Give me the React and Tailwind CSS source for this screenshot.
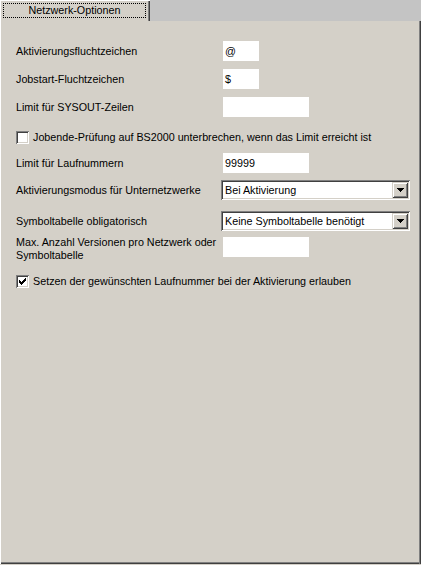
import React from "react";

const sunken =
  "shadow-[inset_1px_1px_#808080,inset_-1px_-1px_#ffffff,inset_2px_2px_#404040,inset_-2px_-2px_#d4d0c8]";
const raised =
  "shadow-[inset_1px_1px_#d4d0c8,inset_-1px_-1px_#404040,inset_2px_2px_#ffffff,inset_-2px_-2px_#808080]";

const TextField = ({ value = "", width }) => {
  return (
    <div
      className="ml-[2px] h-[20px] bg-white flex items-center pl-[2px] leading-none"
      style={{ width }}
    >
      {value}
    </div>
  );
};

const Select = ({ value }) => {
  return (
    <div className={`h-[20px] w-[189px] bg-white flex items-center p-[2px] ${sunken}`}>
      <span className="flex-1 pl-[2px] leading-none">{value}</span>
      <div className={`w-[16px] h-[16px] bg-[#d4d0c8] flex items-center justify-center ${raised}`}>
        <svg width="7" height="4" viewBox="0 0 7 4" shapeRendering="crispEdges">
          <path d="M0 0H7L3.5 4Z" fill="#000" />
        </svg>
      </div>
    </div>
  );
};

const Checkbox = ({ checked }) => {
  return (
    <div className={`w-[13px] h-[13px] bg-white shrink-0 flex items-center justify-center ${sunken}`}>
      {checked && (
        <svg width="13" height="13" viewBox="0 0 13 13" shapeRendering="crispEdges">
          <path d="M3 5H4V6H5V7H6V6H7V5H8V4H9V3H10V6H9V7H8V8H7V9H6V10H5V9H4V8H3Z" fill="#000" />
        </svg>
      )}
    </div>
  );
};

const Row = ({ label, children, className = "" }) => {
  return (
    <div className={`flex items-center h-[20px] ${className}`}>
      <div className="w-[205px]">{label}</div>
      {children}
    </div>
  );
};

export default function App() {
  return (
    <div
      className="w-[421px] h-[565px] bg-[#d4d0c8] flex flex-col text-[10.75px] text-black pb-px"
      style={{ fontFamily: '"Liberation Sans", Arial, sans-serif' }}
    >
      <div className="h-[21px] bg-[#c4c4c4] flex shrink-0">
        <div className="w-[150px] h-[21px] bg-[#d4d0c8] pl-[3px] pr-[3px] pt-[3px] pb-[3px] shadow-[inset_1px_1px_#ffffff,inset_-1px_0_#404040,inset_-2px_0_#808080]">
          <div className="h-[15px] w-[143px] border border-dotted border-black flex items-center justify-center leading-none">
            Netzwerk-Optionen
          </div>
        </div>
      </div>

      <div className="flex-1 flex flex-col pl-[16px] shadow-[inset_1px_0_#ffffff,inset_-1px_0_#404040,inset_-2px_0_#808080,inset_0_-1px_#404040,inset_0_-2px_#808080]">
        <Row label="Aktivierungsfluchtzeichen" className="mt-[20px]">
          <TextField value="@" width={36} />
        </Row>
        <Row label="Jobstart-Fluchtzeichen" className="mt-[8px]">
          <TextField value="$" width={36} />
        </Row>
        <Row label="Limit für SYSOUT-Zeilen" className="mt-[8px]">
          <TextField width={86} />
        </Row>

        <div className="flex items-center h-[20px] mt-[10px] gap-[4px]">
          <Checkbox />
          <span>Jobende-Prüfung auf BS2000 unterbrechen, wenn das Limit erreicht ist</span>
        </div>

        <Row label="Limit für Laufnummern" className="mt-[6px]">
          <TextField value="99999" width={86} />
        </Row>
        <Row label="Aktivierungsmodus für Unternetzwerke" className="mt-[7px]">
          <Select value="Bei Aktivierung" />
        </Row>
        <Row label="Symboltabelle obligatorisch" className="mt-[11px]">
          <Select value="Keine Symboltabelle benötigt" />
        </Row>

        <div className="flex items-start mt-[5px]">
          <div className="w-[205px] leading-[13px]">
            Max. Anzahl Versionen pro Netzwerk oder
            <br />
            Symboltabelle
          </div>
          <div className="mt-[1px]">
            <TextField width={86} />
          </div>
        </div>

        <div className="flex items-center h-[20px] mt-[9px] gap-[4px]">
          <Checkbox checked />
          <span>Setzen der gewünschten Laufnummer bei der Aktivierung erlauben</span>
        </div>
      </div>
    </div>
  );
}
